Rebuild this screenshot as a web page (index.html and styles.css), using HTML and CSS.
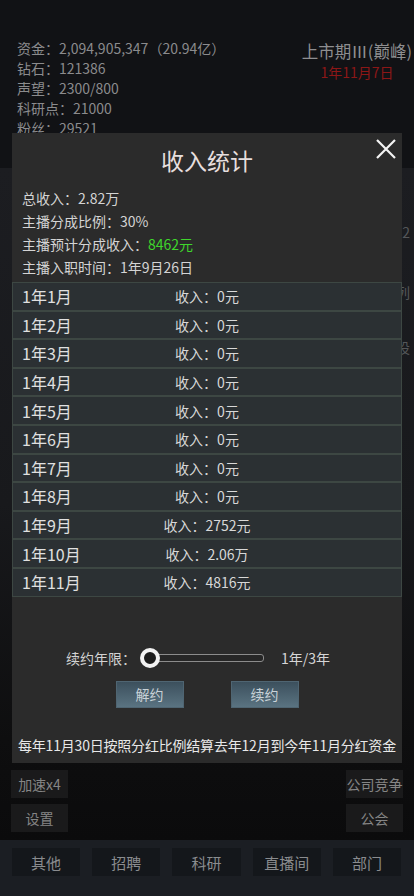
FILE: index.html
```html
<!DOCTYPE html>
<html lang="zh">
<head>
<meta charset="utf-8">
<link rel="stylesheet" href="styles.css">
</head>
<body>
<div class="page">
  <header class="top">
    <div class="stats">
      <div>资金：2,094,905,347（20.94亿）</div>
      <div>钻石：121386</div>
      <div>声望：2300/800</div>
      <div>科研点：21000</div>
      <div>粉丝：29521</div>
    </div>
    <div class="stage">
      <div class="stage-name">上市期Ⅲ(巅峰)</div>
      <div class="stage-date">1年11月7日</div>
    </div>
  </header>
  <main class="panel">
    <div class="ghost">
      <span class="g1">排名2</span>
      <span class="g2">排列</span>
      <span class="g3">建设</span>
    </div>
    <div class="side-rows">
      <div class="side-row"><span class="side-btn">加速x4</span><span class="side-btn">公司竞争</span></div>
      <div class="side-row"><span class="side-btn">设置</span><span class="side-btn">公会</span></div>
    </div>
  </main>
  <nav class="nav">
    <span class="nav-btn">其他</span>
    <span class="nav-btn">招聘</span>
    <span class="nav-btn">科研</span>
    <span class="nav-btn">直播间</span>
    <span class="nav-btn">部门</span>
  </nav>

  <section class="modal">
    <svg class="close" viewBox="0 0 22 22" width="22" height="22"><path d="M2 2 L20 20 M20 2 L2 20" stroke="#f4f4f4" stroke-width="2.2" fill="none"/></svg>
    <h1 class="title">收入统计</h1>
    <div class="info">
      <div>总收入：2.82万</div>
      <div>主播分成比例：30%</div>
      <div>主播预计分成收入：<span class="green">8462元</span></div>
      <div>主播入职时间：1年9月26日</div>
    </div>
    <div class="rows">
      <div class="row"><span class="m">1年1月</span><span class="v">收入：0元</span></div>
      <div class="row"><span class="m">1年2月</span><span class="v">收入：0元</span></div>
      <div class="row"><span class="m">1年3月</span><span class="v">收入：0元</span></div>
      <div class="row"><span class="m">1年4月</span><span class="v">收入：0元</span></div>
      <div class="row"><span class="m">1年5月</span><span class="v">收入：0元</span></div>
      <div class="row"><span class="m">1年6月</span><span class="v">收入：0元</span></div>
      <div class="row"><span class="m">1年7月</span><span class="v">收入：0元</span></div>
      <div class="row"><span class="m">1年8月</span><span class="v">收入：0元</span></div>
      <div class="row"><span class="m">1年9月</span><span class="v">收入：2752元</span></div>
      <div class="row"><span class="m">1年10月</span><span class="v">收入：2.06万</span></div>
      <div class="row"><span class="m">1年11月</span><span class="v">收入：4816元</span></div>
    </div>
    <div class="slider-row">
      <span class="slider-label">续约年限：</span>
      <div class="slider"><span class="track"></span><span class="knob"></span></div>
      <span class="slider-val">1年/3年</span>
    </div>
    <div class="actions">
      <span class="btn">解约</span>
      <span class="btn">续约</span>
    </div>
    <p class="note">每年11月30日按照分红比例结算去年12月到今年11月分红资金</p>
  </section>
</div>
</body>
</html>
```

FILE: styles.css
```css
* { box-sizing: border-box; margin: 0; padding: 0; }
html, body { width: 414px; height: 896px; overflow: hidden; }
body {
  background: #111215;
  font-family: "Noto Sans CJK SC", "Noto Sans", sans-serif;
  color: #ccc;
}
.page {
  position: relative;
  width: 414px;
  height: 896px;
  display: flex;
  flex-direction: column;
}
.top {
  height: 168px;
  padding-top: 38px;
  display: flex;
  justify-content: space-between;
  background: #111215;
}
.stats {
  padding-left: 17px;
  font-size: 14px;
  line-height: 20px;
  color: #8b8b8d;
}
.stage {
  margin-top: 4px;
  margin-right: 2px;
  display: flex;
  flex-direction: column;
  align-items: center;
  gap: 5px;
}
.stage-name {
  font-size: 16.5px;
  line-height: 18px;
  color: #8e8e90;
}
.stage-date {
  font-size: 14px;
  line-height: 15px;
  color: #8c1717;
}
.panel {
  flex: 1;
  display: flex;
  flex-direction: column;
  justify-content: space-between;
  background: linear-gradient(#1c1d21 0%, #18191c 50%, #0e0e0f 85%, #0b0b0c 100%);
  padding-bottom: 8px;
}
.ghost {
  display: flex;
  flex-direction: column;
  align-items: flex-end;
  padding-right: 4px;
  font-size: 14px;
  color: #55575a;
}
.g1 { margin-top: 54px; }
.g2 { margin-top: 40px; }
.g3 { margin-top: 35px; }
.side-rows {
  display: flex;
  flex-direction: column;
  gap: 6px;
  padding: 0 11px;
}
.side-row {
  display: flex;
  justify-content: space-between;
}
.side-btn {
  width: 57px;
  height: 28px;
  background: #1a1a1b;
  color: #858585;
  font-size: 14px;
  display: flex;
  align-items: center;
  justify-content: center;
  white-space: nowrap;
}
.nav {
  height: 56px;
  background: #1b1e23;
  display: flex;
  gap: 12px;
  padding: 8px 13px 0 12px;
}
.nav-btn {
  width: 69px;
  height: 28px;
  background: #14171b;
  color: #8a8c8f;
  font-size: 15px;
  display: flex;
  align-items: center;
  justify-content: center;
}

/* modal overlay */
.modal {
  position: absolute;
  left: 12px;
  top: 133px;
  width: 390px;
  height: 630px;
  background: #2b2b2b;
  display: flex;
  flex-direction: column;
}
.close {
  position: absolute;
  right: 5px;
  top: 5px;
}
.title {
  height: 54px;
  line-height: 54px;
  text-align: center;
  font-size: 23px;
  font-weight: normal;
  color: #e6dede;
}
.info {
  padding-left: 10px;
  font-size: 14px;
  line-height: 23px;
  color: #d4d4d4;
}
.green { color: #3fd62c; }
.rows {
  margin-top: 3px;
  display: flex;
  flex-direction: column;
}
.row {
  height: 28.6px;
  border: 1px solid #3d4743;
  background: #2b3033;
  display: grid;
  grid-template-columns: 1fr auto 1fr;
  align-items: center;
}
.m {
  padding-left: 9px;
  font-size: 16px;
  color: #e0e0e0;
}
.v {
  font-size: 14px;
  color: #d8d8d8;
}
.slider-row {
  margin-top: 49px;
  height: 24px;
  display: flex;
  align-items: center;
  padding-left: 54px;
}
.slider-label {
  font-size: 14px;
  color: #d2d2d2;
  width: 74px;
}
.slider {
  position: relative;
  width: 124px;
  height: 22px;
  display: flex;
  align-items: center;
}
.track {
  margin-left: 8px;
  flex: 1;
  height: 8px;
  border: 1.5px solid #8c8c8c;
  border-radius: 3px;
  background: #262626;
}
.knob {
  position: absolute;
  left: 0;
  top: 1px;
  width: 20px;
  height: 20px;
  border-radius: 50%;
  background: #1c1c1c;
  border: 4px solid #f2f2f2;
}
.slider-val {
  margin-left: 17px;
  font-size: 14px;
  color: #d6d6d6;
}
.actions {
  margin-top: 11px;
  display: flex;
  justify-content: center;
  gap: 47px;
}
.btn {
  width: 68px;
  height: 27px;
  background: linear-gradient(#3c505d, #5a7381);
  border: 1px solid #4f6572;
  color: #c9d2d7;
  font-size: 14px;
  display: flex;
  align-items: center;
  justify-content: center;
}
.note {
  margin-top: 27px;
  text-align: center;
  font-size: 14px;
  line-height: 20px;
  color: #e8e8e8;
  white-space: nowrap;
  letter-spacing: -0.2px;
}
```
